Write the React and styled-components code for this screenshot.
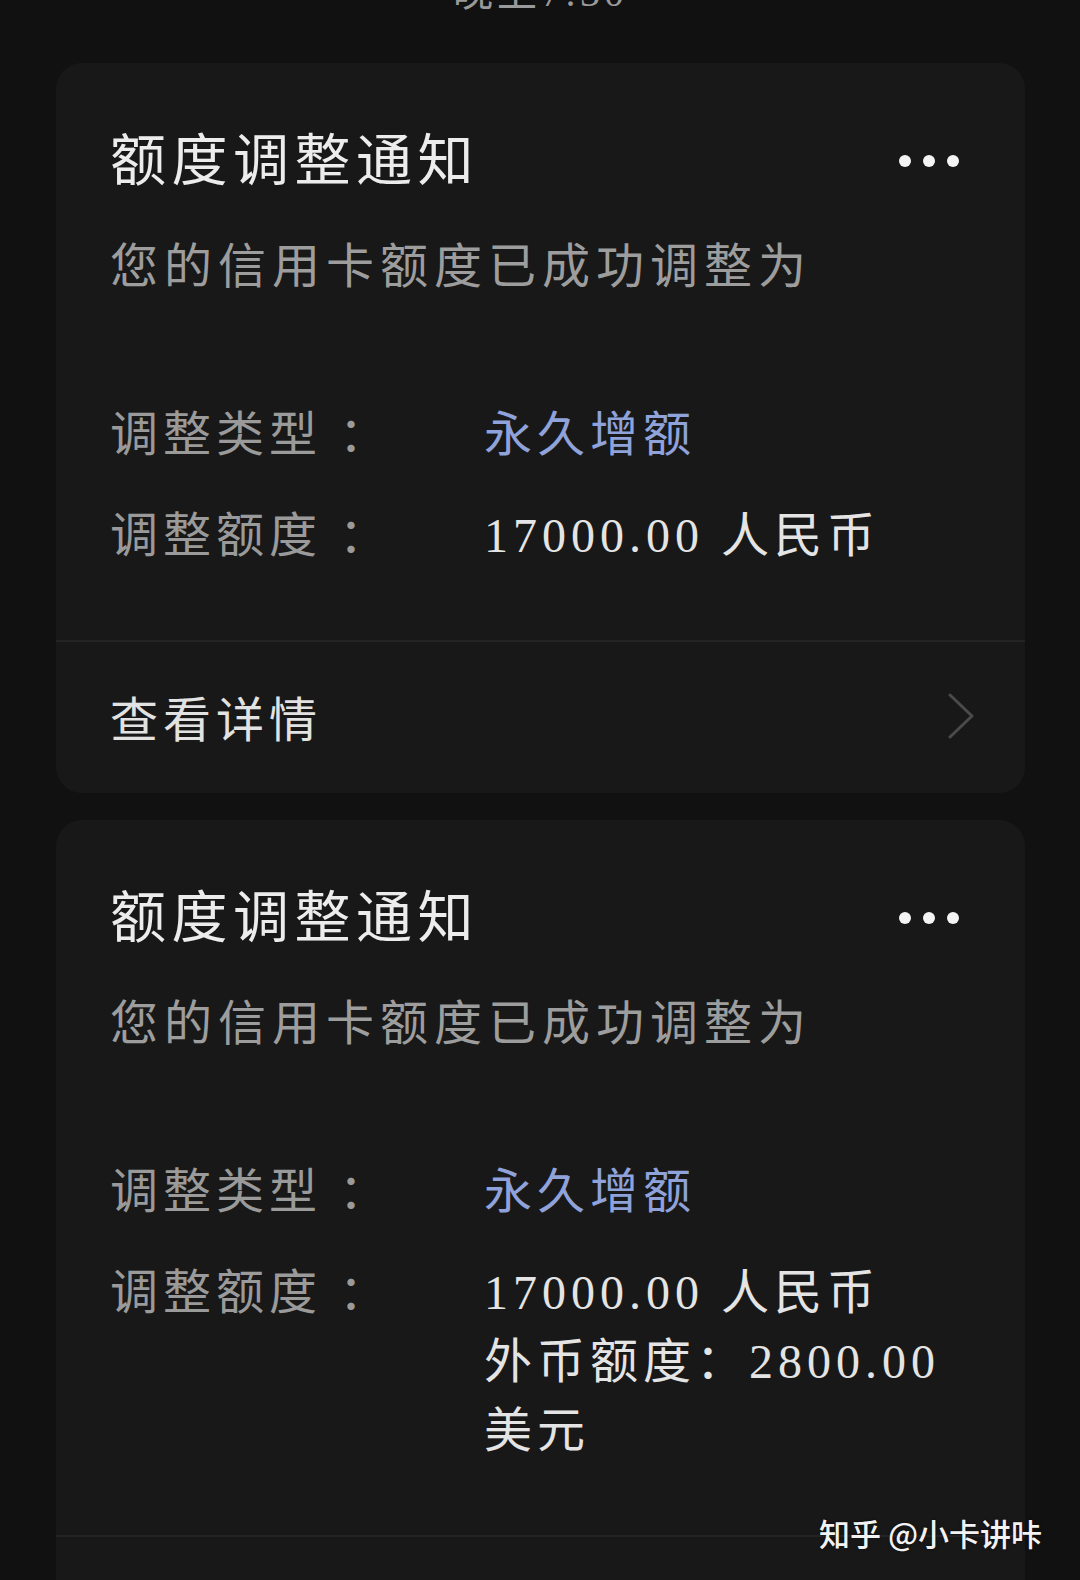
import styled, { createGlobalStyle } from 'styled-components';

const GlobalStyle = createGlobalStyle`
  html, body {
    margin: 0;
    padding: 0;
    background: #111111;
  }
  body {
    font-family: "Liberation Serif", "Noto Sans CJK SC", serif;
  }
`;

const Page = styled.div`
  position: relative;
  width: 1080px;
  height: 1580px;
  overflow: hidden;
  background: #111111;
  display: flex;
  flex-direction: column;
  align-items: stretch;
  padding: 0 55px 0 56px;
  box-sizing: border-box;
`;

const TimeStamp = styled.div`
  margin-top: -31px;
  height: 48px;
  line-height: 48px;
  text-align: center;
  font-size: 40px;
  letter-spacing: 4px;
  color: #9a9a9a;
`;

const CardList = styled.div`
  margin-top: 46px;
  display: flex;
  flex-direction: column;
  gap: 27px;
`;

const Card = styled.section`
  background: #181818;
  border-radius: 26px;
  display: flex;
  flex-direction: column;
`;

const CardBody = styled.div`
  padding: 63px 50px 0 54px;
  display: flex;
  flex-direction: column;
`;

const Header = styled.div`
  display: flex;
  align-items: center;
  justify-content: space-between;
  height: 70px;
`;

const Title = styled.h2`
  margin: 0;
  font-size: 56px;
  font-weight: 400;
  line-height: 70px;
  letter-spacing: 5.5px;
  color: #ececec;
`;

const MoreDots = styled.div`
  display: flex;
  gap: 12px;
  margin-right: 16px;

  span {
    width: 12px;
    height: 12px;
    border-radius: 50%;
    background: #f4f4f4;
  }
`;

const Subtitle = styled.p`
  margin: 36px 0 0;
  font-size: 48px;
  line-height: 70px;
  letter-spacing: 6px;
  color: #9d9d9d;
`;

const Fields = styled.div`
  margin-top: 98px;
  margin-bottom: 70px;
  display: flex;
  flex-direction: column;
  gap: 32px;
`;

const Field = styled.div`
  display: grid;
  grid-template-columns: 374px 1fr;
  font-size: 48px;
  line-height: 69px;
  letter-spacing: 5px;
`;

const Label = styled.div`
  color: #9a9a9a;
`;

const Value = styled.div`
  color: ${(p) => (p.$accent ? '#8fa2da' : '#e4e4e4')};
  display: flex;
  flex-direction: column;
`;

const Divider = styled.div`
  height: 2px;
  background: #242424;
`;

const Footer = styled.div`
  height: 151px;
  padding: 0 50px 4px 54px;
  display: flex;
  align-items: center;
  justify-content: space-between;
  box-sizing: border-box;
`;

const FooterText = styled.span`
  font-size: 48px;
  letter-spacing: 5px;
  color: #e2e2e2;
`;

const Watermark = styled.div`
  position: absolute;
  left: 819px;
  top: 1512px;
  font-family: "Noto Sans CJK SC", sans-serif;
  font-size: 31px;
  font-weight: 500;
  line-height: 42px;
  color: #f2f2f2;
  text-shadow: 0 0 3px rgba(0, 0, 0, 0.6);
  white-space: nowrap;
`;

function Chevron() {
  return (
    <svg width="28" height="46" viewBox="0 0 28 46" fill="none">
      <path d="M3 2 L25 23 L3 44" stroke="#4a4a4a" strokeWidth="3" strokeLinecap="round" strokeLinejoin="round" />
    </svg>
  );
}

const cards = [
  {
    fields: [
      { label: '调整类型 ：', value: ['永久增额'], accent: true },
      { label: '调整额度 ：', value: ['17000.00 人民币'] },
    ],
  },
  {
    fields: [
      { label: '调整类型 ：', value: ['永久增额'], accent: true },
      { label: '调整额度 ：', value: ['17000.00 人民币', '外币额度：2800.00', '美元'] },
    ],
  },
];

function NoticeCard({ fields }) {
  return (
    <Card>
      <CardBody>
        <Header>
          <Title>额度调整通知</Title>
          <MoreDots>
            <span />
            <span />
            <span />
          </MoreDots>
        </Header>
        <Subtitle>您的信用卡额度已成功调整为</Subtitle>
        <Fields>
          {fields.map((f) => (
            <Field key={f.label}>
              <Label>{f.label}</Label>
              <Value $accent={f.accent}>
                {f.value.map((line) => (
                  <span key={line}>{line}</span>
                ))}
              </Value>
            </Field>
          ))}
        </Fields>
      </CardBody>
      <Divider />
      <Footer>
        <FooterText>查看详情</FooterText>
        <Chevron />
      </Footer>
    </Card>
  );
}

export default function App() {
  return (
    <>
      <GlobalStyle />
      <Page>
        <TimeStamp>晚上7:30</TimeStamp>
        <CardList>
          {cards.map((c, i) => (
            <NoticeCard key={i} fields={c.fields} />
          ))}
        </CardList>
        <Watermark>知乎 @小卡讲咔</Watermark>
      </Page>
    </>
  );
}
